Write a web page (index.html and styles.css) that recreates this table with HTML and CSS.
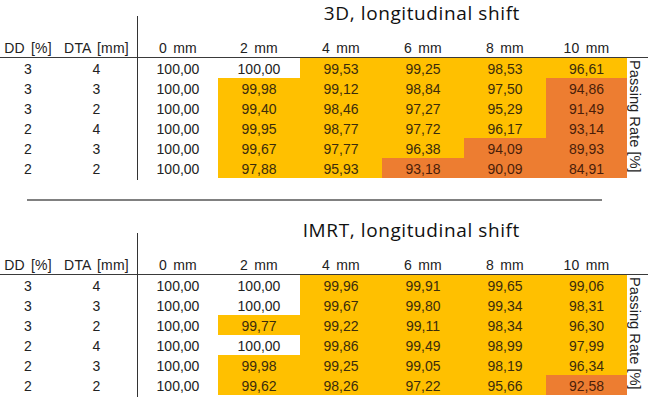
FILE: index.html
```html
<!DOCTYPE html>
<html lang="en">
<head>
<meta charset="utf-8">
<title>Passing rates</title>
<link rel="stylesheet" href="styles.css">
</head>
<body>
<main class="page">
  <section class="tbl">
    <div class="corner"></div>
    <div class="vspace"></div>
    <h2 class="ttl">3D, longitudinal shift</h2>

    <div class="hd">DD [%]</div><div class="hd">DTA [mm]</div><div class="hd v">0 mm</div><div class="hd">2 mm</div><div class="hd">4 mm</div><div class="hd">6 mm</div><div class="hd">8 mm</div><div class="hd">10 mm</div><div class="hd"></div>

    <div class="c">3</div><div class="c">4</div><div class="c v">100,00</div><div class="c">100,00</div><div class="c y">99,53</div><div class="c y">99,25</div><div class="c y">98,53</div><div class="c y">96,61</div><div class="lab">Passing Rate [%]</div>
    <div class="c">3</div><div class="c">3</div><div class="c v">100,00</div><div class="c y">99,98</div><div class="c y">99,12</div><div class="c y">98,84</div><div class="c y">97,50</div><div class="c o">94,86</div>
    <div class="c">3</div><div class="c">2</div><div class="c v">100,00</div><div class="c y">99,40</div><div class="c y">98,46</div><div class="c y">97,27</div><div class="c y">95,29</div><div class="c o">91,49</div>
    <div class="c">2</div><div class="c">4</div><div class="c v">100,00</div><div class="c y">99,95</div><div class="c y">98,77</div><div class="c y">97,72</div><div class="c y">96,17</div><div class="c o">93,14</div>
    <div class="c">2</div><div class="c">3</div><div class="c v">100,00</div><div class="c y">99,67</div><div class="c y">97,77</div><div class="c y">96,38</div><div class="c o">94,09</div><div class="c o">89,93</div>
    <div class="c">2</div><div class="c">2</div><div class="c v">100,00</div><div class="c y">97,88</div><div class="c y">95,93</div><div class="c o">93,18</div><div class="c o">90,09</div><div class="c o">84,91</div>
    <div class="tail"></div>
  </section>

  <hr class="sep">

  <section class="tbl">
    <div class="corner"></div>
    <div class="vspace"></div>
    <h2 class="ttl">IMRT, longitudinal shift</h2>

    <div class="hd">DD [%]</div><div class="hd">DTA [mm]</div><div class="hd v">0 mm</div><div class="hd">2 mm</div><div class="hd">4 mm</div><div class="hd">6 mm</div><div class="hd">8 mm</div><div class="hd">10 mm</div><div class="hd"></div>

    <div class="c">3</div><div class="c">4</div><div class="c v">100,00</div><div class="c">100,00</div><div class="c y">99,96</div><div class="c y">99,91</div><div class="c y">99,65</div><div class="c y">99,06</div><div class="lab">Passing Rate [%]</div>
    <div class="c">3</div><div class="c">3</div><div class="c v">100,00</div><div class="c">100,00</div><div class="c y">99,67</div><div class="c y">99,80</div><div class="c y">99,34</div><div class="c y">98,31</div>
    <div class="c">3</div><div class="c">2</div><div class="c v">100,00</div><div class="c y">99,77</div><div class="c y">99,22</div><div class="c y">99,11</div><div class="c y">98,34</div><div class="c y">96,30</div>
    <div class="c">2</div><div class="c">4</div><div class="c v">100,00</div><div class="c">100,00</div><div class="c y">99,86</div><div class="c y">99,49</div><div class="c y">98,99</div><div class="c y">97,99</div>
    <div class="c">2</div><div class="c">3</div><div class="c v">100,00</div><div class="c y">99,98</div><div class="c y">99,25</div><div class="c y">99,05</div><div class="c y">98,19</div><div class="c y">96,34</div>
    <div class="c">2</div><div class="c">2</div><div class="c v">100,00</div><div class="c y">99,62</div><div class="c y">98,26</div><div class="c y">97,22</div><div class="c y">95,66</div><div class="c o">92,58</div>
    <div class="tail"></div>
  </section>
</main>
</body>
</html>
```

FILE: styles.css
```css
html, body {
  margin: 0;
  padding: 0;
  background: #ffffff;
}

.page {
  width: 653px;
  font-family: "Liberation Sans", Arial, sans-serif;
  font-size: 14px;
  color: #1e1e1e;
}

.tbl {
  display: grid;
  width: 648px;
  grid-template-columns: 56px 81px 81px 82px 82px 82px 82px 81px 21px;
  grid-template-rows: 37px 21px repeat(6, 20px) 2px;
}

.corner {
  grid-column: 1 / 3;
}

.vspace {
  grid-column: 3;
  margin-top: 16px;
  border-left: 1px solid #333333;
}

.ttl {
  grid-column: 4 / 10;
  margin: 0;
  padding-right: 128px;
  text-align: right;
  font-family: "Open Sans", "Noto Sans", sans-serif;
  font-weight: 400;
  font-size: 19px;
  letter-spacing: 0.6px;
  line-height: 26px;
  color: #111111;
  white-space: nowrap;
}

.hd {
  padding-top: 2px;
  line-height: 18px;
  text-align: center;
  white-space: nowrap;
  word-spacing: 2px;
  letter-spacing: 0.2px;
  border-bottom: 1px solid #3a3a3a;
  color: #222222;
}

.c {
  padding-top: 2px;
  line-height: 18px;
  text-align: center;
  white-space: nowrap;
  color: #222222;
}

.v {
  border-left: 1px solid #333333;
}

.y {
  background: #ffc000;
  color: #3b2c0c;
}

.o {
  background: #ed7d31;
  color: #4a1d0a;
}

.lab {
  grid-column: 9;
  grid-row: span 6;
  writing-mode: vertical-rl;
  font-size: 14.7px;
  line-height: 18px;
  padding-top: 2px;
  padding-right: 4px;
  white-space: nowrap;
  color: #222222;
}

.tail {
  grid-column: 3;
  border-left: 1px solid #333333;
}

.sep {
  margin: 19px 0 16px 27px;
  width: 575px;
  height: 2px;
  border: 0;
  background: #808080;
}
```
